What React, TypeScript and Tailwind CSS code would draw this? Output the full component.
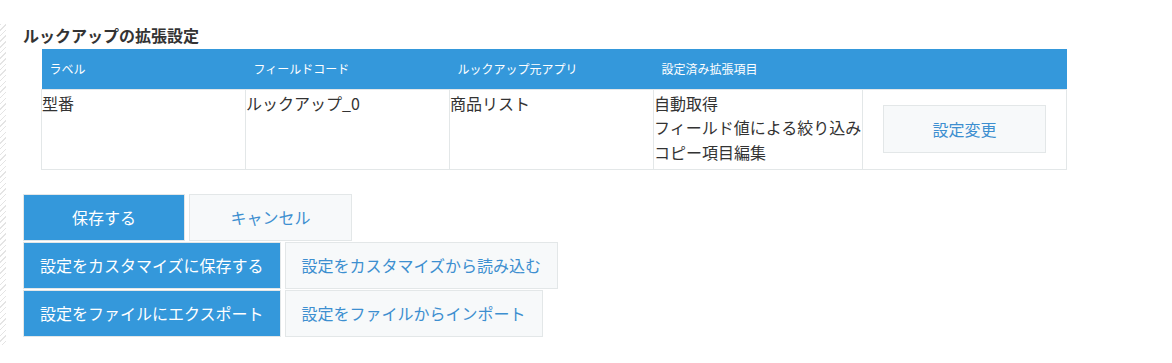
export default function App() {
  const cols = [
    { label: 'ラベル', w: 'w-[204px]' },
    { label: 'フィールドコード', w: 'w-[204px]' },
    { label: 'ルックアップ元アプリ', w: 'w-[204px]' },
    { label: '設定済み拡張項目', w: 'w-[209px]' },
    { label: '', w: 'w-[204px]' },
  ];

  const primary =
    'h-[47px] min-w-[162px] px-4 bg-[#3498db] border border-[#e3e7e8] text-white text-[16px] flex items-center justify-center';
  const normal =
    'h-[47px] min-w-[163px] px-4 bg-[#f7f9fa] border border-[#e3e7e8] text-[#3d8fd0] text-[16px] flex items-center justify-center';

  return (
    <div
      className="flex w-[1172px] h-[363px] bg-white text-[#333]"
      style={{ fontFamily: '"Noto Sans CJK JP", "Noto Sans", sans-serif' }}
    >
      {/* hatched edge on the left */}
      <div className="w-[6px] mt-[24px] mb-[18px] bg-[repeating-linear-gradient(135deg,#e4e4e4_0_1px,transparent_1px_4px)]" />

      <div className="pl-[17px] pt-[25px] flex flex-col">
        <h2 className="text-[16px] font-bold leading-[20px] mb-[4px]">ルックアップの拡張設定</h2>

        <table className="ml-[18px] table-fixed border-collapse w-[1026px]">
          <thead>
            <tr className="bg-[#3498db] h-[40px]">
              {cols.map((c, i) => (
                <th key={i} className={`${c.w} text-left font-normal text-[12px] text-white px-2`}>
                  {c.label}
                </th>
              ))}
            </tr>
          </thead>
          <tbody>
            <tr className="h-[80px] text-[16px] leading-[24.5px]">
              <td className="border border-[#e3e7e8] align-top pt-[1px]">型番</td>
              <td className="border border-[#e3e7e8] align-top pt-[1px]">ルックアップ_0</td>
              <td className="border border-[#e3e7e8] align-top pt-[1px]">商品リスト</td>
              <td className="border border-[#e3e7e8] align-top pt-[1px] whitespace-nowrap">
                自動取得
                <br />
                フィールド値による絞り込み
                <br />
                コピー項目編集
              </td>
              <td className="border border-[#e3e7e8] align-middle">
                <div className="flex justify-center">
                  <button className="w-[163px] h-[48px] bg-[#f7f9fa] border border-[#e3e7e8] text-[#3d8fd0] text-[16px]">
                    設定変更
                  </button>
                </div>
              </td>
            </tr>
          </tbody>
        </table>

        <div className="mt-[24px] flex flex-col gap-[1px]">
          <div className="flex gap-[4px]">
            <button className={primary}>保存する</button>
            <button className={normal}>キャンセル</button>
          </div>
          <div className="flex gap-[4px]">
            <button className={primary}>設定をカスタマイズに保存する</button>
            <button className={normal}>設定をカスタマイズから読み込む</button>
          </div>
          <div className="flex gap-[4px]">
            <button className={primary}>設定をファイルにエクスポート</button>
            <button className={normal}>設定をファイルからインポート</button>
          </div>
        </div>
      </div>
    </div>
  );
}
